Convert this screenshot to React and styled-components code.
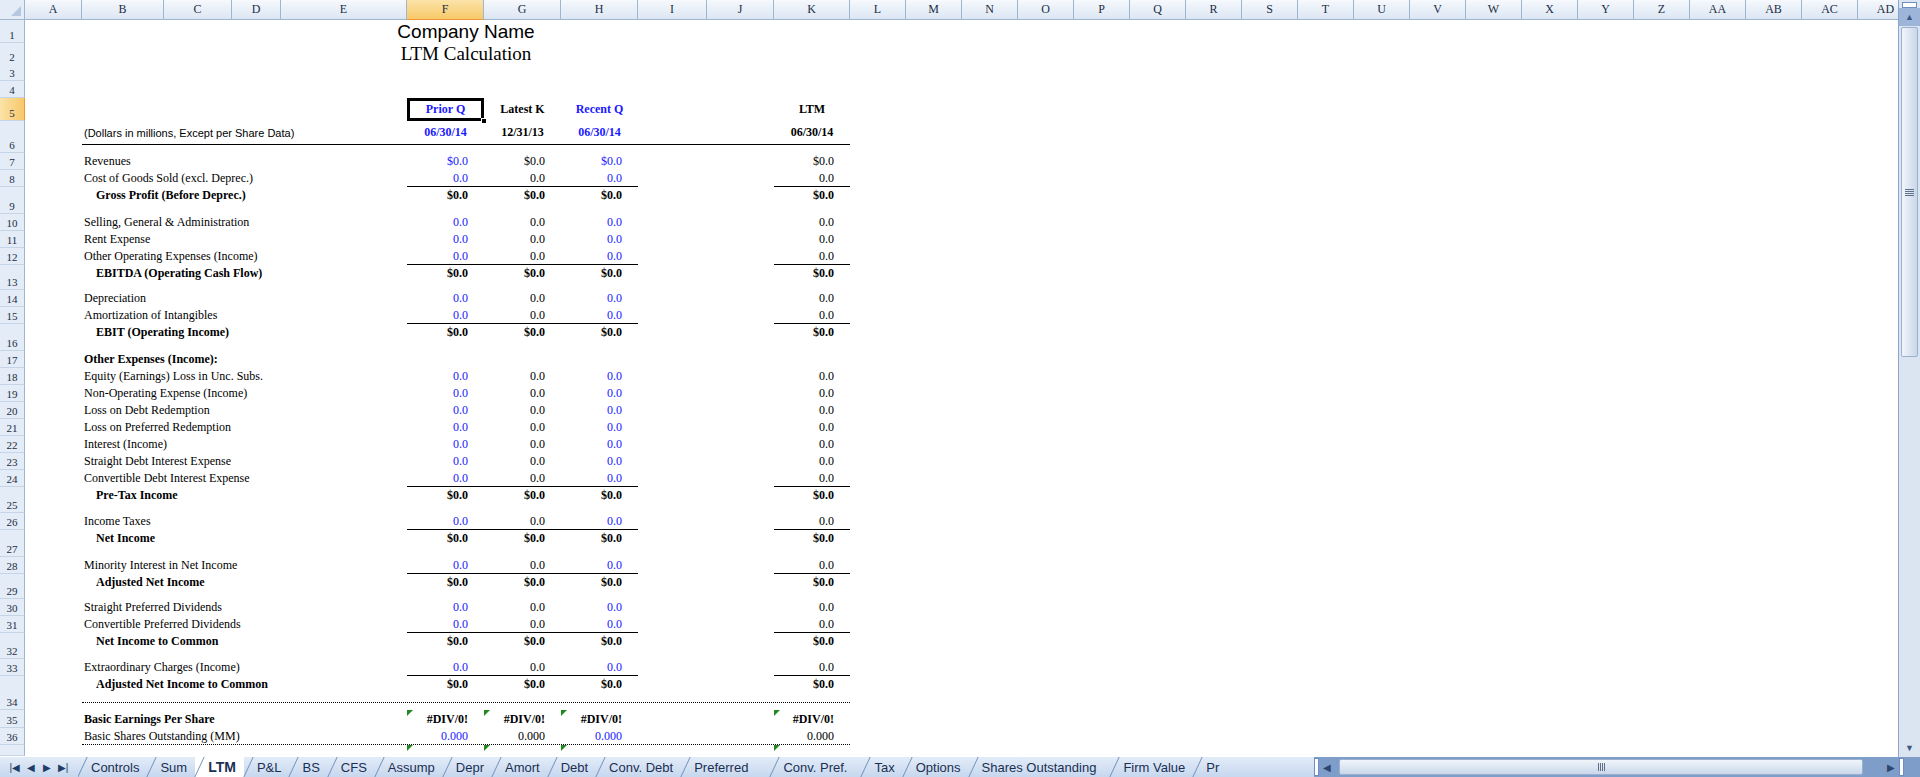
import styled, { createGlobalStyle, css } from "styled-components";

const GlobalStyle = createGlobalStyle`
    html, body { margin: 0; padding: 0; background: #fff; overflow: hidden; }
    * { box-sizing: border-box; }
`

const COLS = "25px 57px 82px 68px 49px 126px 77px 77px 77px 69px 67px 76px repeat(19, 56px)"
const BAND_COLS = "82px 68px 49px 126px 77px 77px 77px 69px 67px 76px"
const LETTERS = ["A","B","C","D","E","F","G","H","I","J","K","L","M","N","O","P","Q","R","S","T","U","V","W","X","Y","Z","AA","AB","AC","AD"]

const Window = styled.div`
    width: 1920px;
    height: 777px;
    display: flex;
    flex-direction: column;
    font-family: "Liberation Serif", "Times New Roman", serif;
    font-size: 12px;
`
const Body = styled.div`
    flex: 1;
    display: flex;
    min-height: 0;
`
const Sheet = styled.div`
    flex: 1;
    overflow: hidden;
    background: #fff;
`
const Grid = styled.div`
    display: grid;
    grid-template-columns: ${COLS};
    height: ${p => p.$h}px;
`
const Corner = styled.div`
    background: #e4ecf7;
    border-right: 1px solid #9eb6ce;
    border-bottom: 1px solid #9eb6ce;
    position: relative;
    &::after {
        content: "";
        position: absolute;
        right: 3px;
        bottom: 3px;
        border-left: 10px solid transparent;
        border-bottom: 10px solid #b5c8df;
    }
`
const ColHead = styled.div`
    display: flex;
    align-items: center;
    justify-content: center;
    font-size: 12px;
    color: #1c2d44;
    border-right: 1px solid #9eb6ce;
    border-bottom: 1px solid #9eb6ce;
    background: linear-gradient(#f6f9fd, #dce6f3);
    ${p => p.$sel && css`
        background: linear-gradient(#fbe3a8, #f7c969);
        border-bottom-color: #f29536;
    `}
`
const RowHead = styled.div`
    display: flex;
    align-items: flex-end;
    justify-content: center;
    padding-bottom: 1px;
    font-size: 11px;
    color: #1c2d44;
    border-right: 1px solid #9eb6ce;
    border-bottom: 1px solid #c5d4e6;
    background: #e4ecf7;
    ${p => p.$sel && css`
        background: linear-gradient(90deg, #fbe3a8, #f7c969);
        border-right-color: #f29536;
    `}
`
const Span = styled.div`
    grid-column: 3 / 13;
    display: flex;
    justify-content: center;
    align-items: flex-end;
    color: #000;
    ${p => p.$title ? css`
        font-family: "Liberation Sans", Arial, sans-serif;
        font-size: 19px;
    ` : css`
        font-size: 19px;
    `}
`
const Band = styled.div`
    grid-column: 3 / 13;
    display: grid;
    grid-template-columns: ${BAND_COLS};
    align-self: start;
    height: ${p => p.$h}px;
    border-bottom: ${p => p.$rule || "none"};
`
const Label = styled.div`
    grid-column: 1 / 5;
    display: flex;
    align-items: ${p => p.$top ? "flex-start" : "center"};
    padding: ${p => p.$top ? "1px" : "0"} 0 0 ${p => p.$indent ? 14 : 2}px;
    font-weight: ${p => p.$bold ? 700 : 400};
    white-space: nowrap;
    ${p => p.$sans && css`
        font-family: "Liberation Sans", Arial, sans-serif;
        font-size: 11px;
    `}
`
const Val = styled.div`
    grid-column: ${p => p.$col};
    position: relative;
    display: flex;
    align-items: ${p => p.$top ? "flex-start" : "center"};
    justify-content: ${p => p.$center ? "center" : "flex-end"};
    padding: ${p => p.$top ? "1px" : "0"} ${p => p.$center ? 0 : 16}px 0 0;
    color: ${p => p.$blue ? "#1a1aff" : "#000"};
    font-weight: ${p => p.$bold ? 700 : 400};
    border-bottom: ${p => p.$under ? "1px solid #000" : "none"};
    white-space: nowrap;
    ${p => p.$selected && css`
        outline: 3px solid #000;
        outline-offset: -3px;
    `}
`
const Handle = styled.span`
    position: absolute;
    right: -3px;
    bottom: -3px;
    width: 6px;
    height: 6px;
    background: #000;
    border: 1px solid #fff;
`
const Flag = styled.span`
    position: absolute;
    left: 0;
    top: 0;
    border-right: 6px solid transparent;
    border-top: 6px solid #1f8a1f;
`

const VScroll = styled.div`
    width: 22px;
    display: flex;
    flex-direction: column;
    background: #dbe5f2;
    border-left: 1px solid #8aa6cf;
`
const SplitBox = styled.div`
    height: 6px;
    margin: 2px 3px 0;
    border: 1px solid #6d8ebf;
    background: #fff;
`
const ArrowBtn = styled.div`
    height: 18px;
    display: flex;
    align-items: center;
    justify-content: center;
    background: ${p => p.$flat ? "transparent" : "#9db5d9"};
    color: #3e5782;
    font-size: 9px;
`
const Thumb = styled.div`
    height: 330px;
    margin: 1px 2px;
    border: 1px solid #9cb1cf;
    border-radius: 2px;
    background: linear-gradient(90deg, #f1f5fb, #c9d7ea);
    display: flex;
    align-items: center;
    justify-content: center;
`
const Grip = styled.div`
    width: 9px;
    height: 7px;
    background: repeating-linear-gradient(#5f6f88 0 1px, transparent 1px 2px);
`
const Track = styled.div`
    flex: 1;
`

const TabBar = styled.div`
    height: 20px;
    display: flex;
    align-items: stretch;
    background: #7e9dc9;
    font-family: "Liberation Sans", Arial, sans-serif;
`
const TabNav = styled.div`
    width: 78px;
    display: flex;
    align-items: center;
    justify-content: space-around;
    padding: 0 6px;
    background: linear-gradient(#e3ecf8, #c6d7ee);
    color: #213c66;
    font-size: 10px;
`
const Tabs = styled.div`
    width: 1236px;
    display: flex;
    overflow: hidden;
    background: linear-gradient(#e3ecf8, #c6d7ee);
`
const Tab = styled.div`
    position: relative;
    flex-shrink: 0;
    display: flex;
    align-items: center;
    padding: 0 ${p => p.$pad || 8}px 0 13px;
    font-size: ${p => p.$active ? 14 : 13}px;
    font-weight: ${p => p.$active ? 700 : 400};
    color: #1a2f52;
    white-space: nowrap;
    background: ${p => p.$active ? "#fff" : "transparent"};
    &::before {
        content: "";
        position: absolute;
        left: 4px;
        top: 0;
        bottom: 0;
        width: 1px;
        background: #7390ba;
        transform: skewX(-25deg);
    }
`
const Splitter = styled.div`
    width: 5px;
    margin: 1px 0;
    background: #fff;
    border: 1px solid #6d8ebf;
`
const HScroll = styled.div`
    flex: 1;
    display: flex;
    align-items: center;
    padding: 1px 2px;
`
const HThumb = styled.div`
    flex: 1;
    height: 16px;
    margin: 0 22px 0 6px;
    border: 1px solid #9cb1cf;
    border-radius: 2px;
    background: linear-gradient(#f1f5fb, #c9d7ea);
    display: flex;
    align-items: center;
    justify-content: center;
`
const HGrip = styled.div`
    width: 7px;
    height: 8px;
    background: repeating-linear-gradient(90deg, #5f6f88 0 1px, transparent 1px 2px);
`
const HArrow = styled.span`
    color: #2c4670;
    font-size: 10px;
    width: 12px;
    text-align: center;
`

const Z = ["$0.0", "$0.0", "$0.0", "$0.0"]
const O = ["0.0", "0.0", "0.0", "0.0"]

const rows = [
    { n: 7, h: 17, label: "Revenues", vals: Z },
    { n: 8, h: 17, label: "Cost of Goods Sold (excl. Deprec.)", vals: O, under: true },
    { n: 9, h: 27, label: "Gross Profit (Before Deprec.)", total: true },
    { n: 10, h: 17, label: "Selling, General & Administration", vals: O },
    { n: 11, h: 17, label: "Rent Expense", vals: O },
    { n: 12, h: 17, label: "Other Operating Expenses (Income)", vals: O, under: true },
    { n: 13, h: 25, label: "EBITDA (Operating Cash Flow)", total: true },
    { n: 14, h: 17, label: "Depreciation", vals: O },
    { n: 15, h: 17, label: "Amortization of Intangibles", vals: O, under: true },
    { n: 16, h: 27, label: "EBIT (Operating Income)", total: true },
    { n: 17, h: 17, label: "Other Expenses (Income):", bold: true },
    { n: 18, h: 17, label: "Equity (Earnings) Loss in Unc. Subs.", vals: O },
    { n: 19, h: 17, label: "Non-Operating Expense (Income)", vals: O },
    { n: 20, h: 17, label: "Loss on Debt Redemption", vals: O },
    { n: 21, h: 17, label: "Loss on Preferred Redemption", vals: O },
    { n: 22, h: 17, label: "Interest (Income)", vals: O },
    { n: 23, h: 17, label: "Straight Debt Interest Expense", vals: O },
    { n: 24, h: 17, label: "Convertible Debt Interest Expense", vals: O, under: true },
    { n: 25, h: 26, label: "Pre-Tax Income", total: true },
    { n: 26, h: 17, label: "Income Taxes", vals: O, under: true },
    { n: 27, h: 27, label: "Net Income", total: true },
    { n: 28, h: 17, label: "Minority Interest in Net Income", vals: O, under: true },
    { n: 29, h: 25, label: "Adjusted Net Income", total: true },
    { n: 30, h: 17, label: "Straight Preferred Dividends", vals: O },
    { n: 31, h: 17, label: "Convertible Preferred Dividends", vals: O, under: true },
    { n: 32, h: 26, label: "Net Income to Common", total: true },
    { n: 33, h: 17, label: "Extraordinary Charges (Income)", vals: O, under: true },
    { n: 34, h: 34, band: 27, label: "Adjusted Net Income to Common", total: true, dotted: true },
    { n: 35, h: 18, label: "Basic Earnings Per Share", bold: true, vals: ["#DIV/0!", "#DIV/0!", "#DIV/0!", "#DIV/0!"], allBold: true, flags: true },
    { n: 36, h: 17, label: "Basic Shares Outstanding (MM)", vals: ["0.000", "0.000", "0.000", "0.000"], dotted: true },
]

const VAL_COLS = [5, 6, 7, 10]

const TABS = ["Controls", "Sum", "LTM", "P&L", "BS", "CFS", "Assump", "Depr", "Amort", "Debt", "Conv. Debt", "Preferred", "Conv. Pref.", "Tax", "Options", "Shares Outstanding", "Firm Value", "Pr"]
const TAB_PAD = { "Preferred": 22, "Conv. Pref.": 14, "Shares Outstanding": 14 }

function DataRow({ r }) {
    const vals = r.total ? Z : r.vals
    return (
        <Grid $h={r.h}>
            <RowHead>{r.n}</RowHead>
            <div />
            <Band $h={r.band || r.h} $rule={r.dotted ? "1px dotted #000" : null}>
                <Label $top={r.total} $bold={r.total || r.bold} $indent={r.total}>{r.label}</Label>
                {vals && vals.map((v, i) => (
                    <Val key={i} $col={VAL_COLS[i]} $top={r.total}
                        $blue={!r.total && !r.allBold && (i === 0 || i === 2)}
                        $bold={r.total || r.allBold} $under={r.under}>
                        {r.flags && <Flag />}
                        {v}
                    </Val>
                ))}
            </Band>
        </Grid>
    )
}

function App() {
    return (
        <Window>
            <GlobalStyle />
            <Body>
                <Sheet>
                    <Grid $h={20}>
                        <Corner />
                        {LETTERS.map(l => <ColHead key={l} $sel={l === "F"}>{l}</ColHead>)}
                    </Grid>
                    <Grid $h={23}>
                        <RowHead>1</RowHead><div />
                        <Span $title>Company Name</Span>
                    </Grid>
                    <Grid $h={21}>
                        <RowHead>2</RowHead><div />
                        <Span>LTM Calculation</Span>
                    </Grid>
                    <Grid $h={17}><RowHead>3</RowHead></Grid>
                    <Grid $h={17}><RowHead>4</RowHead></Grid>
                    <Grid $h={23}>
                        <RowHead $sel>5</RowHead><div />
                        <Band $h={23}>
                            <Val $col={5} $center $bold $blue $selected>Prior Q<Handle /></Val>
                            <Val $col={6} $center $bold>Latest K</Val>
                            <Val $col={7} $center $bold $blue>Recent Q</Val>
                            <Val $col={10} $center $bold>LTM</Val>
                        </Band>
                    </Grid>
                    <Grid $h={32}>
                        <RowHead>6</RowHead><div />
                        <Band $h={24} $rule="1px solid #000">
                            <Label $sans>(Dollars in millions, Except per Share Data)</Label>
                            <Val $col={5} $center $bold $blue>06/30/14</Val>
                            <Val $col={6} $center $bold>12/31/13</Val>
                            <Val $col={7} $center $bold $blue>06/30/14</Val>
                            <Val $col={10} $center $bold>06/30/14</Val>
                        </Band>
                    </Grid>
                    {rows.map(r => <DataRow key={r.n} r={r} />)}
                    <Grid $h={11}>
                        <RowHead />
                        <div />
                        <Band $h={11}>
                            {VAL_COLS.map(c => <Val key={c} $col={c}><Flag /></Val>)}
                        </Band>
                    </Grid>
                </Sheet>
                <VScroll>
                    <SplitBox />
                    <ArrowBtn>▲</ArrowBtn>
                    <Thumb><Grip /></Thumb>
                    <Track />
                    <ArrowBtn $flat>▼</ArrowBtn>
                </VScroll>
            </Body>
            <TabBar>
                <TabNav><span>|◀</span><span>◀</span><span>▶</span><span>▶|</span></TabNav>
                <Tabs>
                    {TABS.map(t => (
                        <Tab key={t} $active={t === "LTM"} $pad={TAB_PAD[t]}>{t}</Tab>
                    ))}
                </Tabs>
                <Splitter />
                <HScroll>
                    <HArrow>◀</HArrow>
                    <HThumb><HGrip /></HThumb>
                    <HArrow>▶</HArrow>
                </HScroll>
                <Splitter />
                <div style={{ width: 16 }} />
            </TabBar>
        </Window>
    )
}

export default App;
